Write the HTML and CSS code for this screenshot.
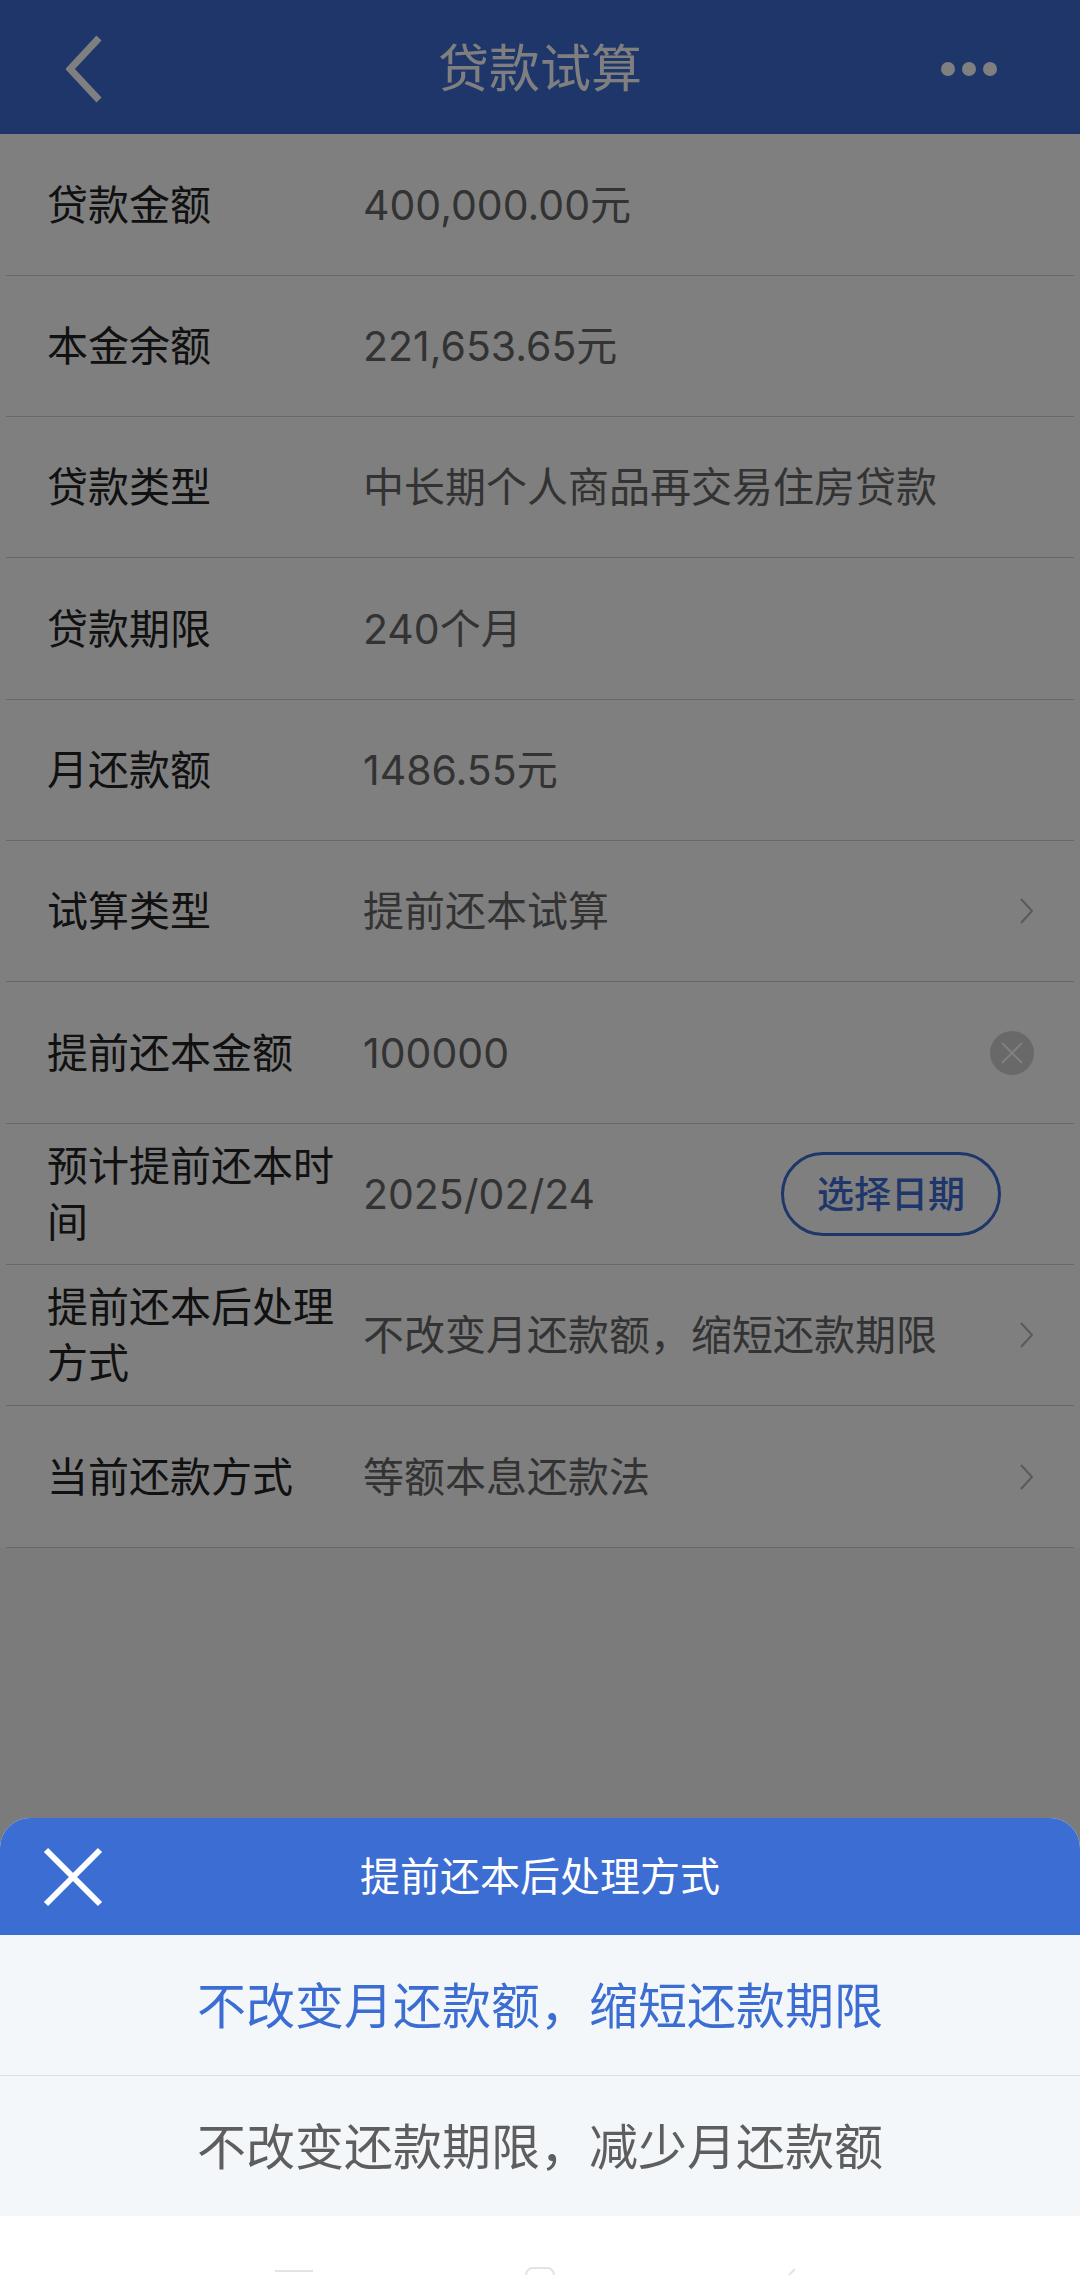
FILE: index.html
```html
<!DOCTYPE html>
<html lang="zh-CN">
<head>
<meta charset="UTF-8">
<meta name="viewport" content="width=device-width, initial-scale=1.0">
<title>贷款试算</title>
<link rel="stylesheet" href="styles.css">
</head>
<body>
<header class="header">
    <button type="button" class="icon-btn" aria-label="返回">
        <svg width="36" height="68" viewBox="0 0 36 68"><path d="M33 3 L4 34 L33 65" fill="none" stroke="#fff" stroke-width="7"/></svg>
    </button>
    <h1>贷款试算</h1>
    <button type="button" class="icon-btn more-btn" aria-label="更多">
        <svg width="58" height="16" viewBox="0 0 58 16"><g fill="#fff"><circle cx="8" cy="8" r="7"/><circle cx="29" cy="8" r="7"/><circle cx="50" cy="8" r="7"/></g></svg>
    </button>
</header>

<form class="list">
    <div class="row">
        <span class="label">贷款金额</span>
        <span class="value">400,000.00元</span>
    </div>
    <div class="row">
        <span class="label">本金余额</span>
        <span class="value">221,653.65元</span>
    </div>
    <div class="row">
        <span class="label">贷款类型</span>
        <span class="value">中长期个人商品再交易住房贷款</span>
    </div>
    <div class="row">
        <span class="label">贷款期限</span>
        <span class="value">240个月</span>
    </div>
    <div class="row">
        <span class="label">月还款额</span>
        <span class="value">1486.55元</span>
    </div>
    <div class="row">
        <span class="label" id="type-label">试算类型</span>
        <button type="button" class="value picker" aria-describedby="type-label">
            <span>提前还本试算</span>
            <svg class="arrow" width="14" height="26" viewBox="0 0 14 26"><path d="M1 1 L12 13 L1 25"/></svg>
        </button>
    </div>
    <div class="row">
        <label class="label" for="amount">提前还本金额</label>
        <input type="text" class="value" id="amount" value="100000" inputmode="numeric">
        <button type="button" class="icon-btn" id="clear-btn" aria-label="清除">
            <svg width="44" height="44" viewBox="0 0 44 44"><circle cx="22" cy="22" r="22" fill="#d2d2d2"/><path d="M12 12 L32 32 M32 12 L12 32" stroke="#fff" stroke-width="2"/></svg>
        </button>
    </div>
    <div class="row">
        <span class="label">预计提前还本时间</span>
        <span class="value">2025/02/24</span>
        <button type="button" class="date-btn">选择日期</button>
    </div>
    <div class="row">
        <span class="label" id="after-label">提前还本后处理方式</span>
        <button type="button" class="value picker" id="after-btn" aria-describedby="after-label">
            <span id="after-value">不改变月还款额，缩短还款期限</span>
            <svg class="arrow" width="14" height="26" viewBox="0 0 14 26"><path d="M1 1 L12 13 L1 25"/></svg>
        </button>
    </div>
    <div class="row">
        <span class="label" id="method-label">当前还款方式</span>
        <button type="button" class="value picker" aria-describedby="method-label">
            <span>等额本息还款法</span>
            <svg class="arrow" width="14" height="26" viewBox="0 0 14 26"><path d="M1 1 L12 13 L1 25"/></svg>
        </button>
    </div>
</form>

<!-- 底部选择弹窗 -->
<div class="overlay" id="overlay"></div>
<div class="bottom">
    <div class="sheet" id="sheet">
        <div class="sheet-header">
            <button type="button" class="icon-btn" id="close-btn" aria-label="关闭">
                <svg width="60" height="60" viewBox="0 0 60 60"><path d="M3 3 L57 57 M57 3 L3 57" stroke="#fff" stroke-width="6"/></svg>
            </button>
            <h2>提前还本后处理方式</h2>
        </div>
        <button type="button" class="option selected">不改变月还款额，缩短还款期限</button>
        <button type="button" class="option">不改变还款期限，减少月还款额</button>
    </div>
    <!-- 系统导航栏 -->
    <div class="nav-bar">
        <svg width="38" height="38" viewBox="0 0 38 38"><path d="M0 5 H38 M0 19 H38 M0 33 H38"/></svg>
        <svg width="32" height="38" viewBox="0 0 32 38"><rect x="2" y="2" width="28" height="32" rx="7"/></svg>
        <svg width="38" height="38" viewBox="0 0 38 38"><path d="M28 3 L12 19 L28 35"/></svg>
    </div>
</div>

<script>
    const overlay = document.getElementById("overlay");
    const sheet = document.getElementById("sheet");

    function toggleSheet(show) {
        overlay.hidden = !show;
        sheet.hidden = !show;
    }

    document.getElementById("after-btn").onclick = () => toggleSheet(true);
    document.getElementById("close-btn").onclick = () => toggleSheet(false);
    overlay.onclick = () => toggleSheet(false);

    document.getElementById("clear-btn").onclick = () => {
        document.getElementById("amount").value = "";
    };

    document.querySelectorAll(".option").forEach(option => {
        option.onclick = () => {
            document.querySelector(".option.selected").classList.remove("selected");
            option.classList.add("selected");
            document.getElementById("after-value").textContent = option.textContent;
            toggleSheet(false);
        };
    });
</script>
</body>
</html>
```

FILE: styles.css
```css
* {
    box-sizing: border-box;
}
body {
    margin: 0;
    min-height: 100vh;
    background-color: #f7f7f7;
    font-family: Inter, "Noto Sans CJK SC", sans-serif;
    color: #222;
}
button, input {
    font-family: inherit;
    border: none;
    background: none;
    padding: 0;
    outline: none;
}
button {
    cursor: pointer;
}
svg {
    display: block;
}
[hidden] {
    display: none !important;
}
.header {
    display: grid;
    grid-template-columns: 1fr auto 1fr;
    align-items: center;
    height: 134px;
    padding: 4px 66px 0;
    background-color: #3c6dd2;
    color: white;
}
.header h1 {
    margin: 0;
    font-size: 51px;
    line-height: 60px;
    font-weight: 400;
}
.icon-btn {
    justify-self: start;
}
.more-btn {
    justify-self: end;
    margin-right: 16px;
}
.list {
    padding: 0 6px;
    background-color: white;
}
.row {
    display: flex;
    align-items: center;
    min-height: 141px;
    padding: 0 40px 0 41px;
    border-bottom: 1px solid #d0d0d0;
    font-size: 41px;
    line-height: 56px;
}
.row:nth-child(3n+1) {
    min-height: 142px;
}
.label {
    flex: none;
    width: 304px;
    padding-right: 12px;
}
.value {
    flex: 1;
    min-width: 0;
    margin-left: 12px;
    font-size: 41px;
    line-height: 56px;
    color: #666;
    text-align: left;
}
.picker {
    display: flex;
    justify-content: space-between;
    align-items: center;
}
.arrow {
    fill: none;
    stroke: #b4b4b4;
    stroke-width: 2;
}
.date-btn {
    margin-right: 33px;
    padding-bottom: 4px;
    width: 220px;
    height: 84px;
    border: 3px solid #3c6dd2;
    border-radius: 42px;
    font-size: 37px;
    font-weight: 500;
    color: #3c6dd2;
}
.overlay {
    position: fixed;
    top: 0;
    left: 0;
    width: 100%;
    height: 100%;
    background-color: rgba(0, 0, 0, 0.5);
}
.bottom {
    position: fixed;
    left: 0;
    right: 0;
    bottom: 0;
}
.sheet {
    border-radius: 30px 30px 0 0;
    overflow: hidden;
    background-color: #f3f7fa;
}
.sheet-header {
    display: grid;
    grid-template-columns: 1fr auto 1fr;
    align-items: center;
    height: 117px;
    padding: 0 43px;
    background-color: #3c6dd2;
    color: white;
}
.sheet-header h2 {
    margin: 0;
    font-size: 40px;
    line-height: 56px;
    font-weight: 400;
}
.option {
    display: block;
    width: 100%;
    height: 140px;
    padding-bottom: 6px;
    font-size: 49px;
    color: #5e5e5e;
}
.option + .option {
    border-top: 1px solid #dbe0e4;
    height: 141px;
}
.option.selected {
    color: #3c6dd2;
}
.nav-bar {
    display: flex;
    justify-content: space-around;
    height: 59px;
    padding: 50px 170px 0;
    overflow: hidden;
    background-color: white;
}
.nav-bar svg {
    fill: none;
    stroke: #e0e4e8;
    stroke-width: 2;
}
```
